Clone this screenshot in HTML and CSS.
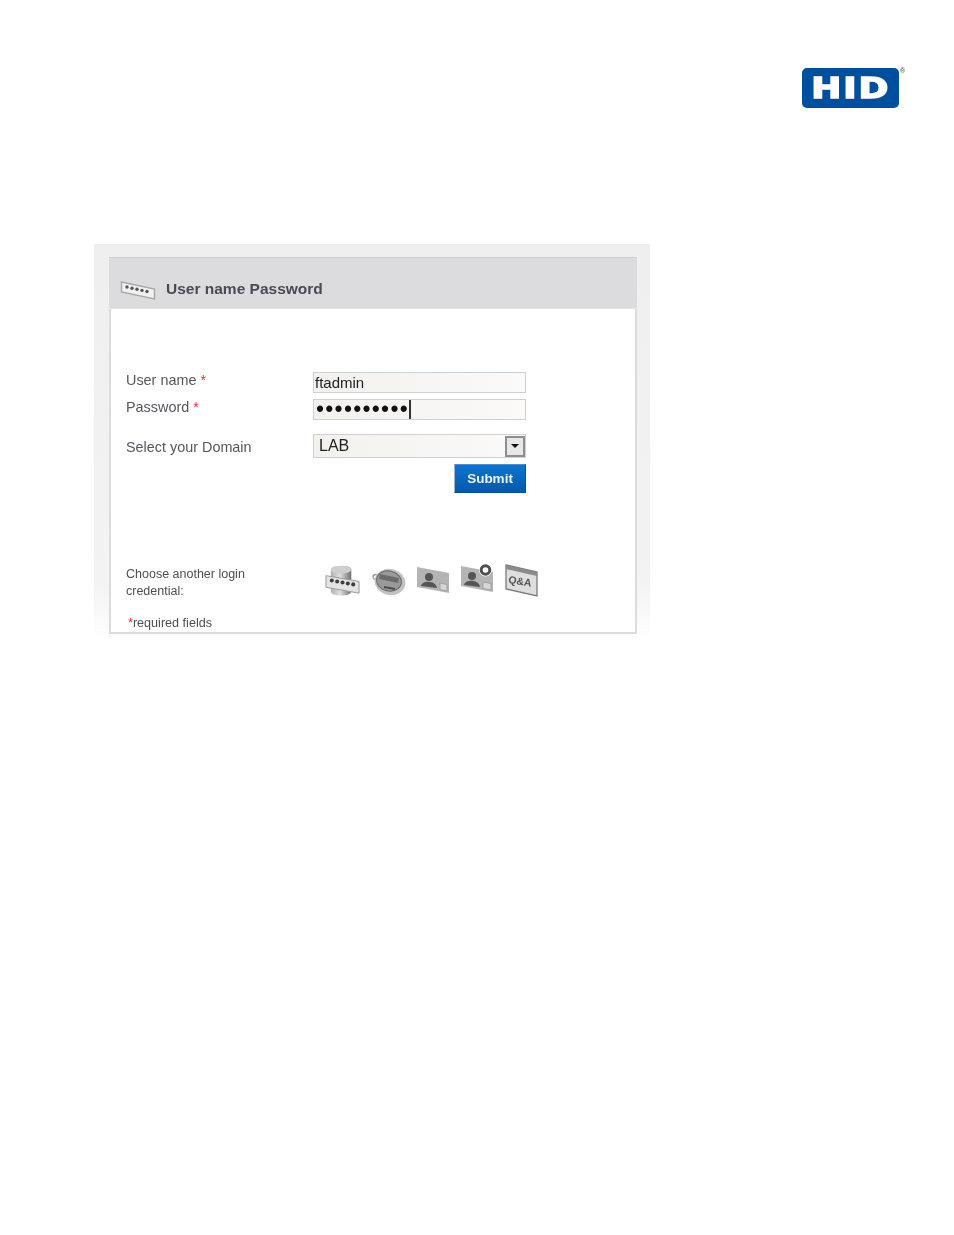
FILE: index.html
```html
<!DOCTYPE html>
<html lang="en">
<head>
<meta charset="utf-8">
<title>User name Password</title>
<link rel="stylesheet" href="styles.css">
</head>
<body>
<header class="top">
  <div class="logo"><span class="logo-text">HID</span><span class="reg">®</span></div>
</header>
<main class="frame">
  <section class="panel">
    <div class="panel-head">
      <svg class="head-icon" width="36" height="22" viewBox="0 0 36 22">
        <path d="M1.500 3 L34.500 10 L34.500 20 L1.500 13 Z" fill="#f1f1f1" stroke="#a8a8a8" stroke-width="1.400"/>
        <g fill="#555"><circle cx="7" cy="8" r="1.700"/><circle cx="12" cy="9.200" r="1.700"/><circle cx="17" cy="10.300" r="1.700"/><circle cx="22" cy="11.400" r="1.700"/><circle cx="27" cy="12.500" r="1.700"/></g>
      </svg>
      <h1 class="panel-title">User name Password</h1>
    </div>
    <form class="form">
      <div class="row row-user">
        <label class="label">User name<span class="req"> *</span></label>
        <div class="field">ftadmin</div>
      </div>
      <div class="row row-pass">
        <label class="label">Password<span class="req"> *</span></label>
        <div class="field field-pass"><span class="dots">••••••••••</span><span class="caret"></span></div>
      </div>
      <div class="row row-domain">
        <label class="label label-domain">Select your Domain</label>
        <div class="select"><span class="select-value">LAB</span><span class="select-btn"><span class="arrow"></span></span></div>
      </div>
      <div class="submit-row"><button type="button" class="submit">Submit</button></div>
    </form>
    <div class="cred">
      <p class="cred-label">Choose another login credential:</p>
      <div class="cred-icons">
        <svg class="ci-token" width="36" height="33" viewBox="0 0 37 32">
          <defs><linearGradient id="g1" x1="0" x2="1" y1="0" y2="0"><stop offset="0" stop-color="#b0b0b0"/><stop offset=".45" stop-color="#e0e0e0"/><stop offset="1" stop-color="#6f6f6f"/></linearGradient></defs>
          <path d="M6 5 C6 -0.500 27 -0.500 27 5 L27 27 C27 33 6 33 6 27 Z" fill="url(#g1)"/>
          <ellipse cx="16.500" cy="5" rx="10.500" ry="4" fill="#cfcfcf"/>
          <path d="M1 11 L35 17 L35 29 L1 23 Z" fill="#e4e4e4" stroke="#999"/>
          <g fill="#3f3f3f"><circle cx="7" cy="16" r="2.100"/><circle cx="12.500" cy="17" r="2.100"/><circle cx="18" cy="18" r="2.100"/><circle cx="23.500" cy="19" r="2.100"/><circle cx="29" cy="20" r="2.100"/></g>
        </svg>
        <svg class="ci-otp" width="34" height="30" viewBox="0 0 34 30">
          <circle cx="3.500" cy="10" r="2.500" fill="none" stroke="#999" stroke-width="1.300"/>
          <ellipse cx="18" cy="15" rx="15.500" ry="13" fill="#c2c2c2" transform="rotate(12 18 15)"/>
          <ellipse cx="17" cy="14" rx="12.500" ry="10" fill="#9a9a9a" stroke="#666" transform="rotate(12 17 14)"/>
          <path d="M8 7 L27 11 L26 16 L7 12 Z" fill="#6a6a6a"/>
          <path d="M12 20 L23 22" stroke="#4c4c4c" stroke-width="2"/>
        </svg>
        <svg class="ci-card" width="34" height="28" viewBox="0 0 34 28">
          <path d="M1 1 L33 7 L33 27 L1 21 Z" fill="#b4b4b4"/>
          <circle cx="13" cy="11" r="4" fill="#555"/>
          <path d="M5 20 C6 14 20 14 21 22 Z" fill="#555"/>
          <path d="M24 17 L31 18.500 L31 25 L24 23.500 Z" fill="#d6d6d6" stroke="#999" stroke-width=".800"/>
        </svg>
        <svg class="ci-card2" width="34" height="31" viewBox="0 0 34 31">
          <path d="M1 4 L33 10 L33 30 L1 24 Z" fill="#b4b4b4"/>
          <circle cx="12" cy="14" r="4" fill="#555"/>
          <path d="M4 23 C5 17 19 17 20 25 Z" fill="#555"/>
          <path d="M23 20 L31 21.500 L31 28 L23 26.500 Z" fill="#d6d6d6" stroke="#999" stroke-width=".800"/>
          <circle cx="25.500" cy="8" r="6.500" fill="#fff"/>
          <circle cx="25.500" cy="8" r="4.300" fill="none" stroke="#4f4f4f" stroke-width="3"/>
        </svg>
        <svg class="ci-qa" width="33" height="33" viewBox="0 0 33 33">
          <path d="M1 1 L32 8 L32 32 L1 25 Z" fill="#dedede" stroke="#7a7a7a" stroke-width="1.300"/>
          <path d="M1 1 L32 8 L32 12 L1 5 Z" fill="#8a8a8a"/>
          <text x="3" y="19" class="qa-text" transform="rotate(9 3 19)">Q&amp;A</text>
        </svg>
      </div>
    </div>
    <p class="required"><span class="req">*</span>required fields</p>
  </section>
</main>
</body>
</html>
```

FILE: styles.css
```css
* { box-sizing: border-box; }
html, body { margin: 0; padding: 0; background: #fff; }
body {
  width: 954px;
  min-height: 1235px;
  font-family: "Liberation Sans", Arial, sans-serif;
  overflow: hidden;
}
.top {
  height: 244px;
  padding: 68px 55px 0 0;
  display: flex;
  justify-content: flex-end;
}
.logo {
  position: relative;
  width: 97px;
  height: 40px;
  background: #004f9f;
  border-radius: 5px;
  display: flex;
  align-items: center;
  justify-content: center;
  filter: blur(.3px);
}
.logo-text {
  font-family: "DejaVu Sans", sans-serif;
  font-weight: 700;
  font-size: 29px;
  line-height: 40px;
  letter-spacing: 1.500px;
  color: #fff;
  -webkit-text-stroke: 1.500px #fff;
  transform: scaleX(1.24);
}
.reg {
  position: absolute;
  left: 98px;
  top: -1px;
  font-size: 7px;
  line-height: 8px;
  color: #444;
}
.frame {
  margin-left: 94px;
  width: 556px;
  height: 400px;
  padding: 13px 13px 0 15px;
  background: linear-gradient(#efefef 0, #f3f3f3 340px, #fff 400px);
}
.panel {
  width: 528px;
  height: 377px;
  background: #fff;
  border: 2px solid #dcdcdc;
  border-top: 0;
  position: relative;
  filter: blur(.4px);
}
.panel-head {
  margin: 0 -2px;
  height: 52px;
  background: #dcdcde;
  border-top: 1px solid #cfcfcf;
  border-bottom: 1px solid #e6e6e6;
  display: flex;
  align-items: flex-start;
  padding: 21px 0 0 11px;
}
.head-icon { flex: none; margin-right: 10px; }
.panel-title {
  margin: 0;
  font-size: 15.500px;
  line-height: 20px;
  font-weight: 700;
  color: #4a4a55;
}
.form { padding: 63px 0 0 15px; }
.row { display: flex; align-items: flex-start; }
.row-pass { margin-top: 6px; }
.row-domain { margin-top: 14px; }
.label {
  width: 187px;
  flex: none;
  font-size: 14.400px;
  line-height: 18px;
  color: #55555f;
}
.label-domain { margin-top: 4px; }
.req { color: #ea2a3a; }
.field {
  width: 213px;
  height: 21px;
  border: 1px solid #cfcfd6;
  background: linear-gradient(90deg, #f3f1ee, #fbfaf8);
  font-size: 15px;
  line-height: 20px;
  padding-left: 1px;
  color: #222;
  display: flex;
  align-items: center;
}
.field-pass { padding-left: 2px; }
.row-user .label, .row-pass .label { margin-top: -1px; }
.dots {
  font-size: 23px;
  line-height: 19px;
  letter-spacing: 1.250px;
  color: #111;
}
.caret { width: 2px; height: 19px; background: #333; }
.select {
  width: 213px;
  height: 24px;
  border: 1px solid #cfcfd6;
  background: linear-gradient(90deg, #f3f1ee, #fbfaf8);
  display: flex;
  justify-content: space-between;
  align-items: center;
  padding-left: 5px;
  font-size: 16px;
  color: #222;
}
.select-btn {
  width: 20px;
  height: 21px;
  border: 2px solid #8f8f8f;
  background: #e8e8e8;
  display: flex;
  align-items: center;
  justify-content: center;
}
.arrow {
  width: 0;
  height: 0;
  border-left: 4px solid transparent;
  border-right: 4px solid transparent;
  border-top: 4px solid #111;
}
.submit-row { width: 400px; margin-top: 6px; display: flex; justify-content: flex-end; }
.submit {
  width: 72px;
  height: 29px;
  padding: 0;
  border: 1px solid #0a4f96;
  border-left-color: #9db4cc;
  border-top-color: #4d8ecb;
  background: linear-gradient(#0f74cf, #0558ab);
  color: #e8f1fa;
  font: 700 13.500px/27px "Liberation Sans", Arial, sans-serif;
}
.cred {
  display: flex;
  align-items: flex-start;
  padding: 64px 0 0 15px;
}
.cred-label {
  margin: 9px 0 0;
  width: 130px;
  flex: none;
  font-size: 12.500px;
  line-height: 17px;
  color: #4e4e56;
}
.cred-icons {
  margin-left: 69px;
  display: flex;
  align-items: flex-start;
  filter: blur(.7px);
}
.ci-token { margin-top: 7px; }
.ci-otp { margin: 10px 0 0 11px; }
.ci-card { margin: 9px 0 0 10px; }
.ci-card2 { margin: 5px 0 0 10px; }
.ci-qa { margin: 7px 0 0 11px; }
.qa-text { font: 700 10.500px "Liberation Sans", Arial, sans-serif; fill: #555; }
.required {
  margin: 15px 0 0 17px;
  font-size: 12.600px;
  line-height: 16px;
  color: #4e4e56;
}
```
